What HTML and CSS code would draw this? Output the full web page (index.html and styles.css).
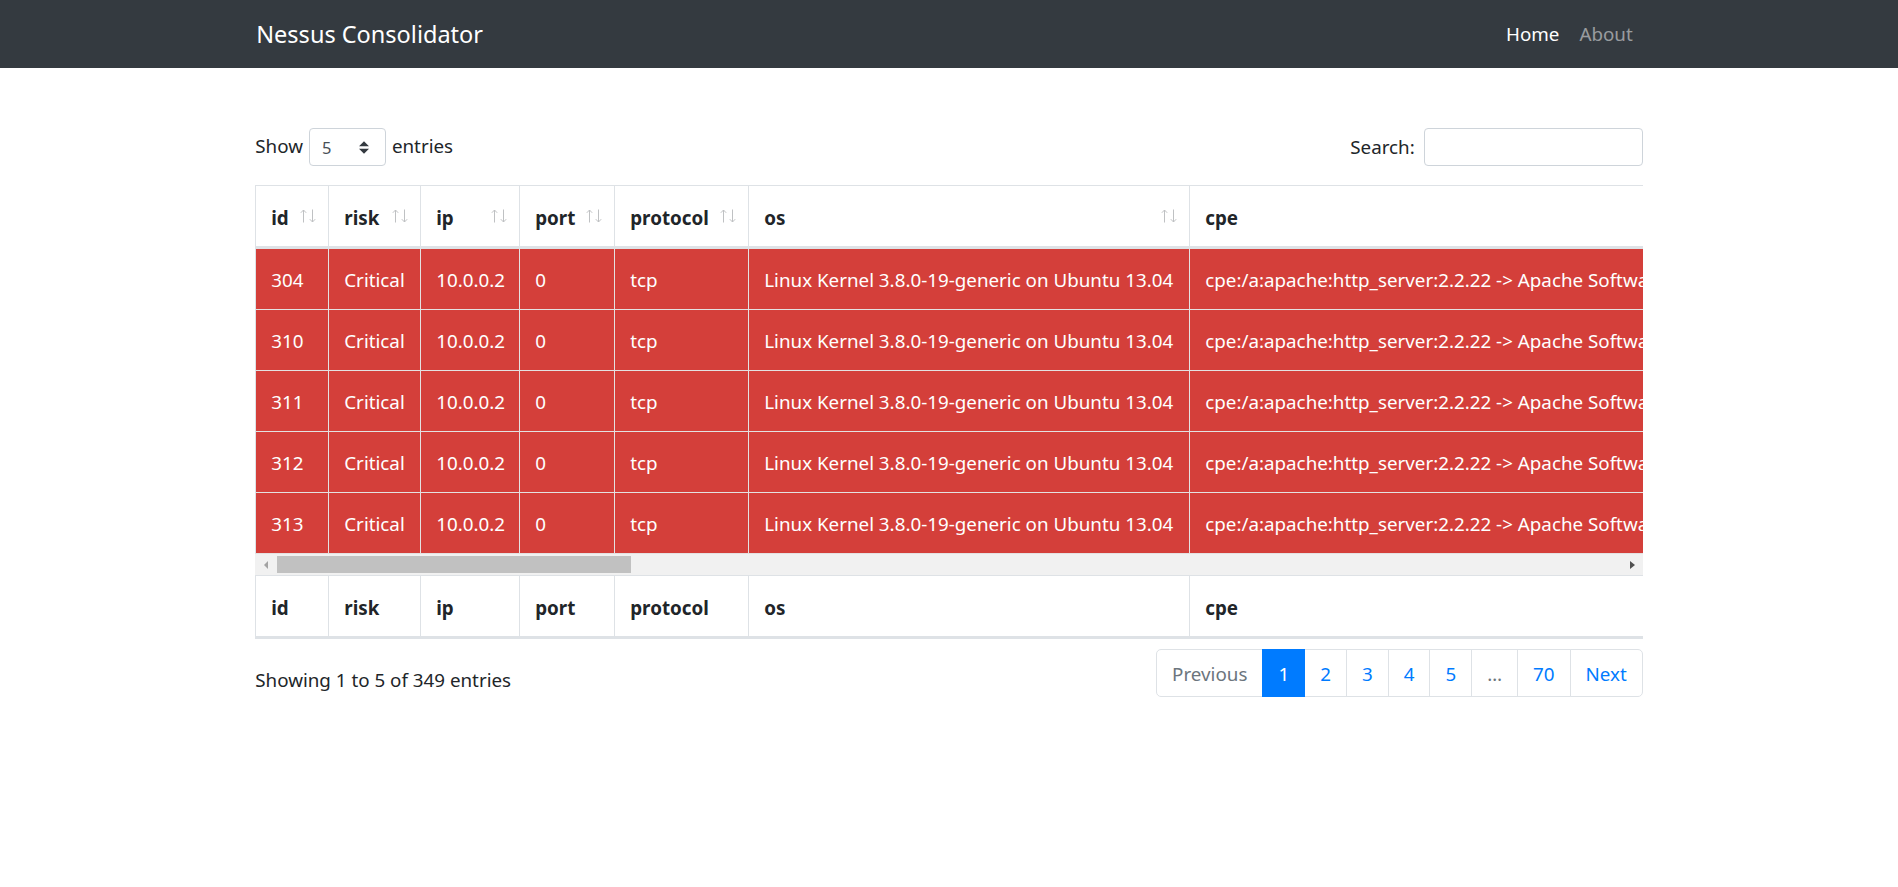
FILE: index.html
```html
<!DOCTYPE html>
<html lang="en">
<head>
<meta charset="utf-8">
<title>Nessus Consolidator</title>
<link rel="stylesheet" href="styles.css">
</head>
<body>
<nav class="navbar">
  <div class="container nav-inner">
    <span class="brand">Nessus Consolidator</span>
    <div class="nav">
      <span class="nav-link active">Home</span>
      <span class="nav-link">About</span>
    </div>
  </div>
</nav>

<main class="container main">
  <div class="toolbar">
    <div class="length">
      <span class="lbl">Show</span>
      <span class="select"><span class="select-val">5</span><svg class="select-caret" width="10" height="13" viewBox="0 0 4 5"><path fill="#343a40" d="M2 0L0 2h4zm0 5L0 3h4z"/></svg></span>
      <span class="lbl">entries</span>
    </div>
    <div class="filter">
      <span>Search:</span>
      <span class="input"></span>
    </div>
  </div>

  <div class="dt">
    <div class="dt-clip">
      <table class="grid head">
        <colgroup><col class="c1"><col class="c2"><col class="c3"><col class="c4"><col class="c5"><col class="c6"><col class="c7"></colgroup>
        <thead>
          <tr>
            <th>id<svg class="sort" width="17" height="14" viewBox="0 0 17 14"><path d="M3.5 13.5V1M0.8 3.8L3.5 1l2.7 2.8M12.5 0.5V13M9.8 10.2l2.7 2.8 2.7-2.8" fill="none" stroke="#bfc1c3" stroke-width="1"/></svg></th>
            <th>risk<svg class="sort" width="17" height="14" viewBox="0 0 17 14"><path d="M3.5 13.5V1M0.8 3.8L3.5 1l2.7 2.8M12.5 0.5V13M9.8 10.2l2.7 2.8 2.7-2.8" fill="none" stroke="#bfc1c3" stroke-width="1"/></svg></th>
            <th>ip<svg class="sort" width="17" height="14" viewBox="0 0 17 14"><path d="M3.5 13.5V1M0.8 3.8L3.5 1l2.7 2.8M12.5 0.5V13M9.8 10.2l2.7 2.8 2.7-2.8" fill="none" stroke="#bfc1c3" stroke-width="1"/></svg></th>
            <th>port<svg class="sort" width="17" height="14" viewBox="0 0 17 14"><path d="M3.5 13.5V1M0.8 3.8L3.5 1l2.7 2.8M12.5 0.5V13M9.8 10.2l2.7 2.8 2.7-2.8" fill="none" stroke="#bfc1c3" stroke-width="1"/></svg></th>
            <th>protocol<svg class="sort" width="17" height="14" viewBox="0 0 17 14"><path d="M3.5 13.5V1M0.8 3.8L3.5 1l2.7 2.8M12.5 0.5V13M9.8 10.2l2.7 2.8 2.7-2.8" fill="none" stroke="#bfc1c3" stroke-width="1"/></svg></th>
            <th>os<svg class="sort" width="17" height="14" viewBox="0 0 17 14"><path d="M3.5 13.5V1M0.8 3.8L3.5 1l2.7 2.8M12.5 0.5V13M9.8 10.2l2.7 2.8 2.7-2.8" fill="none" stroke="#bfc1c3" stroke-width="1"/></svg></th>
            <th>cpe</th>
          </tr>
        </thead>
      </table>
    </div>

    <div class="dt-clip">
      <table class="grid body">
        <colgroup><col class="c1"><col class="c2"><col class="c3"><col class="c4"><col class="c5"><col class="c6"><col class="c7"></colgroup>
        <tbody>
          <tr><td>304</td><td>Critical</td><td>10.0.0.2</td><td>0</td><td>tcp</td><td>Linux Kernel 3.8.0-19-generic on Ubuntu 13.04</td><td>cpe:/a:apache:http_server:2.2.22 -&gt; Apache Software Foundation Apache HTTP Server 2.2.22</td></tr>
          <tr><td>310</td><td>Critical</td><td>10.0.0.2</td><td>0</td><td>tcp</td><td>Linux Kernel 3.8.0-19-generic on Ubuntu 13.04</td><td>cpe:/a:apache:http_server:2.2.22 -&gt; Apache Software Foundation Apache HTTP Server 2.2.22</td></tr>
          <tr><td>311</td><td>Critical</td><td>10.0.0.2</td><td>0</td><td>tcp</td><td>Linux Kernel 3.8.0-19-generic on Ubuntu 13.04</td><td>cpe:/a:apache:http_server:2.2.22 -&gt; Apache Software Foundation Apache HTTP Server 2.2.22</td></tr>
          <tr><td>312</td><td>Critical</td><td>10.0.0.2</td><td>0</td><td>tcp</td><td>Linux Kernel 3.8.0-19-generic on Ubuntu 13.04</td><td>cpe:/a:apache:http_server:2.2.22 -&gt; Apache Software Foundation Apache HTTP Server 2.2.22</td></tr>
          <tr><td>313</td><td>Critical</td><td>10.0.0.2</td><td>0</td><td>tcp</td><td>Linux Kernel 3.8.0-19-generic on Ubuntu 13.04</td><td>cpe:/a:apache:http_server:2.2.22 -&gt; Apache Software Foundation Apache HTTP Server 2.2.22</td></tr>
        </tbody>
      </table>
    </div>

    <div class="hscroll">
      <span class="sb-btn"><span class="tri-left"></span></span>
      <span class="sb-track"><span class="sb-thumb"></span></span>
      <span class="sb-btn"><span class="tri-right"></span></span>
    </div>

    <div class="dt-clip">
      <table class="grid foot">
        <colgroup><col class="c1"><col class="c2"><col class="c3"><col class="c4"><col class="c5"><col class="c6"><col class="c7"></colgroup>
        <tfoot>
          <tr><th>id</th><th>risk</th><th>ip</th><th>port</th><th>protocol</th><th>os</th><th>cpe</th></tr>
        </tfoot>
      </table>
    </div>
  </div>

  <div class="bottom">
    <div class="info">Showing 1 to 5 of 349 entries</div>
    <ul class="pagination">
      <li class="page disabled">Previous</li>
      <li class="page active">1</li>
      <li class="page">2</li>
      <li class="page">3</li>
      <li class="page">4</li>
      <li class="page">5</li>
      <li class="page disabled">…</li>
      <li class="page">70</li>
      <li class="page">Next</li>
    </ul>
  </div>
</main>
</body>
</html>
```
FILE: styles.css
```css
* { box-sizing: border-box; }

body {
  margin: 0;
  font-family: "Noto Sans", "Open Sans", sans-serif;
  font-size: 18.8px;
  line-height: 30px;
  color: #212529;
  background: #fff;
}

.container {
  width: 1425px;
  margin: 0 auto;
  padding: 0 18.75px;
}

/* navbar */
.navbar {
  background: #343a40;
  height: 68px;
}
.nav-inner {
  height: 100%;
  display: flex;
  align-items: center;
  justify-content: space-between;
}
.brand {
  color: #fff;
  font-size: 23.5px;
  line-height: 37px;
  padding-left: 1px;
}
.nav { display: flex; }
.nav-link {
  padding: 0 10px;
  color: rgba(255, 255, 255, 0.5);
}
.nav-link.active { color: #fff; }

/* toolbar */
.main { padding-top: 60px; }

.toolbar {
  display: flex;
  align-items: center;
  justify-content: space-between;
  height: 38px;
}
.length, .filter {
  display: flex;
  align-items: center;
}
.lbl { padding-bottom: 3px; }
.select {
  display: flex;
  align-items: center;
  justify-content: space-between;
  width: 77px;
  height: 38px;
  margin: 0 6px;
  padding: 0 16px 0 12px;
  border: 1px solid #ced4da;
  border-radius: 4px;
  font-size: 16.5px;
  color: #495057;
}
.select-val { padding-top: 2px; }
.input {
  display: block;
  width: 219px;
  height: 38px;
  margin-left: 9px;
  border: 1px solid #ced4da;
  border-radius: 4px;
}

/* table */
.dt {
  margin-top: 19px;
  width: 1388px;
}
.dt-clip {
  width: 1388px;
  overflow: hidden;
}
.grid {
  table-layout: fixed;
  border-collapse: separate;
  border-spacing: 0;
  width: 2335px;
  border-left: 1px solid #dee2e6;
}
.c1 { width: 73px; }
.c2 { width: 92px; }
.c3 { width: 99px; }
.c4 { width: 95px; }
.c5 { width: 134px; }
.c6 { width: 441px; }
.c7 { width: 1400px; }

.grid th, .grid td {
  text-align: left;
  white-space: nowrap;
  overflow: hidden;
  border-right: 1px solid #dee2e6;
  vertical-align: top;
}
.grid th {
  padding: 17px 15px 13px;
  font-weight: 700;
  position: relative;
}
.grid td {
  padding: 16px 15px 14px;
}
.head th {
  border-top: 1px solid #dee2e6;
  border-bottom: 3px solid #dee2e6;
}
.sort {
  position: absolute;
  right: 11px;
  top: 23px;
}
.body td {
  background: #d43f3a;
  color: #fff;
  border-bottom: 1px solid #e4e1e1;
  border-right-color: #e4e1e1;
}
.foot th {
  border-top: 1px solid #dee2e6;
  border-bottom: 3px solid #dee2e6;
}

/* fake horizontal scrollbar */
.hscroll {
  display: flex;
  height: 21px;
  background: #f1f1f1;
}
.sb-btn {
  width: 21px;
  display: flex;
  align-items: center;
  justify-content: center;
}
.tri-left {
  width: 0; height: 0;
  border-top: 4px solid transparent;
  border-bottom: 4px solid transparent;
  border-right: 4px solid #a3a3a3;
}
.tri-right {
  width: 0; height: 0;
  border-top: 4px solid transparent;
  border-bottom: 4px solid transparent;
  border-left: 5px solid #505050;
}
.sb-track {
  flex: 1;
  display: flex;
  align-items: center;
}
.sb-thumb {
  display: block;
  width: 354px;
  height: 17px;
  margin-left: 1px;
  background: #c1c1c1;
}

/* bottom */
.bottom {
  margin-top: 10px;
  display: flex;
  justify-content: space-between;
  align-items: flex-start;
}
.info { padding-top: 16px; }
.pagination {
  list-style: none;
  margin: 0;
  padding: 0;
  display: flex;
}
.page {
  padding: 11px 15px 9px;
  line-height: 26px;
  margin-left: -1px;
  color: #007bff;
  border: 1px solid #dee2e6;
  background: #fff;
}
.page:first-child {
  margin-left: 0;
  border-radius: 5px 0 0 5px;
}
.page:last-child { border-radius: 0 5px 5px 0; }
.page.disabled { color: #6c757d; }
.page.active {
  background: #007bff;
  border-color: #007bff;
  color: #fff;
  position: relative;
}
```
